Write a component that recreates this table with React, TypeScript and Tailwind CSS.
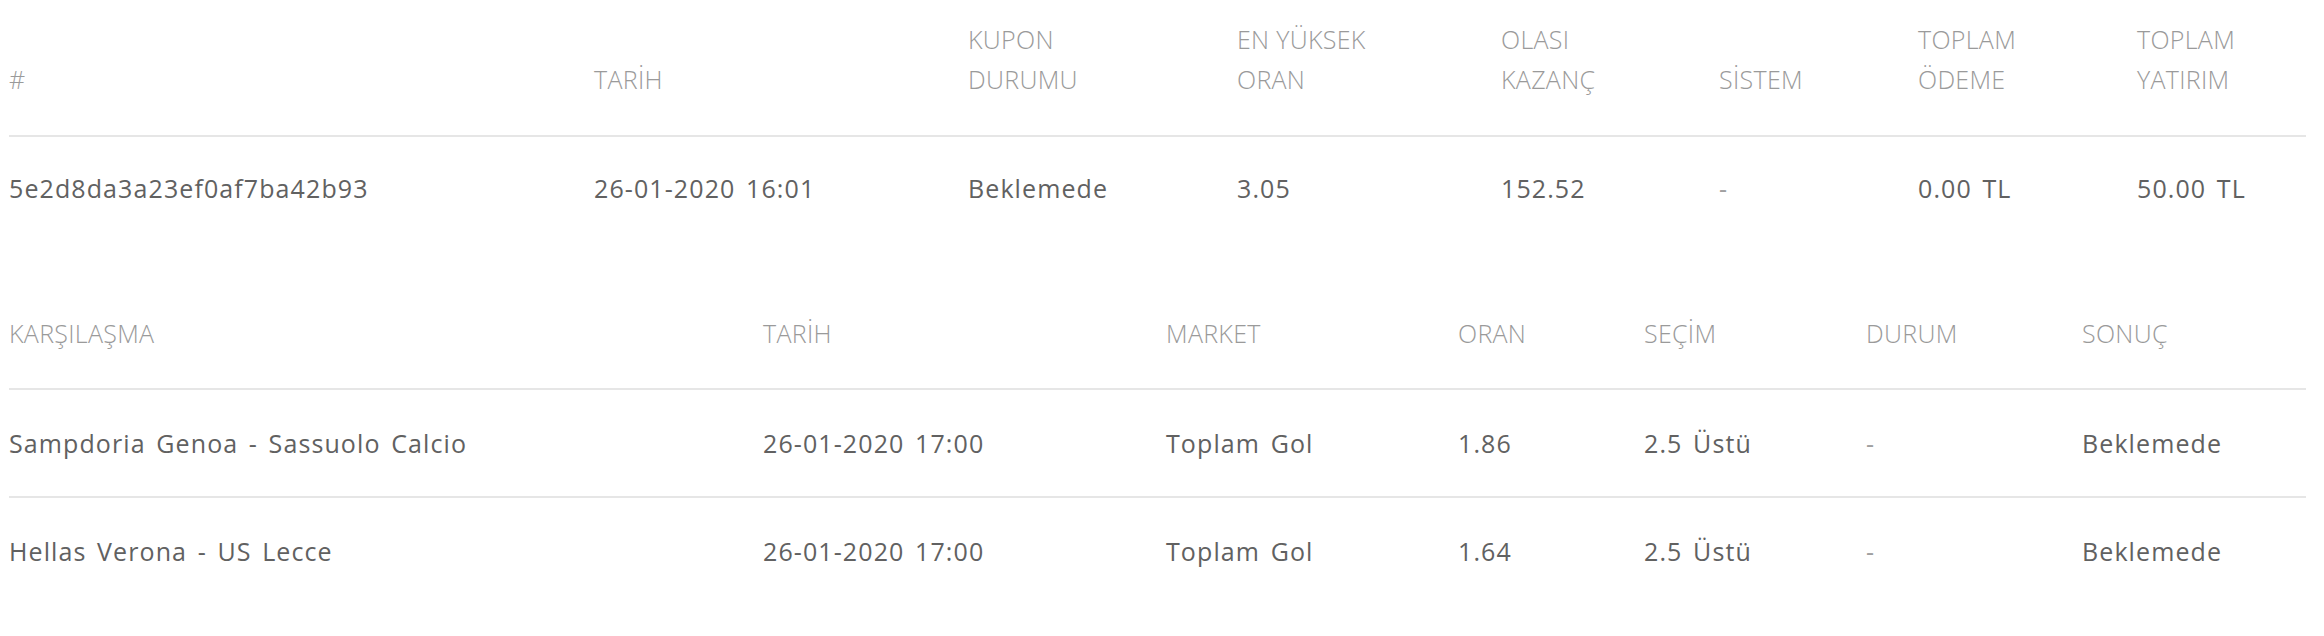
import React from 'react';

const couponCols = 'grid grid-cols-[585px_374px_269px_264px_218px_199px_219px_1fr]';
const matchCols = 'grid grid-cols-[754px_403px_292px_186px_222px_216px_1fr]';

const couponHead = ['#', 'TARİH', 'KUPON\nDURUMU', 'EN YÜKSEK\nORAN', 'OLASI\nKAZANÇ', 'SİSTEM', 'TOPLAM\nÖDEME', 'TOPLAM\nYATIRIM'];
const couponRow = ['5e2d8da3a23ef0af7ba42b93', '26-01-2020 16:01', 'Beklemede', '3.05', '152.52', '-', '0.00 TL', '50.00 TL'];

const matchHead = ['KARŞILAŞMA', 'TARİH', 'MARKET', 'ORAN', 'SEÇİM', 'DURUM', 'SONUÇ'];
const matches = [
  ['Sampdoria Genoa - Sassuolo Calcio', '26-01-2020 17:00', 'Toplam Gol', '1.86', '2.5 Üstü', '-', 'Beklemede'],
  ['Hellas Verona - US Lecce', '26-01-2020 17:00', 'Toplam Gol', '1.64', '2.5 Üstü', '-', 'Beklemede'],
];

function HeadCell({ text }: { text: string }) {
  return (
    <div className="flex flex-col justify-end whitespace-pre-line tracking-[0.3px] text-[#9a9a9a] font-light">
      {text}
    </div>
  );
}

function BodyCell({ text }: { text: string }) {
  return (
    <div className={`tracking-[1.1px] [word-spacing:3px] ${text === '-' ? 'text-[#a0a0a0]' : ''}`}>{text}</div>
  );
}

export default function App() {
  return (
    <div className="w-[2324px] h-[636px] bg-white pl-[9px] pr-[18px] text-[25px] leading-[40px] font-['Open_Sans','Lato',sans-serif]">
      {/* Kupon özeti */}
      <div className={`${couponCols} pt-[19px] pb-[36px] border-b-2 border-[#e6e6e6]`}>
        {couponHead.map((h) => (
          <HeadCell key={h} text={h} />
        ))}
      </div>
      <div className={`${couponCols} py-[31px] text-[#616161]`}>
        {couponRow.map((c, i) => (
          <BodyCell key={i} text={c} />
        ))}
      </div>

      {/* Karşılaşmalar */}
      <div className={`${matchCols} mt-[41px] pt-[33px] pb-[35px] border-b-2 border-[#e6e6e6]`}>
        {matchHead.map((h) => (
          <HeadCell key={h} text={h} />
        ))}
      </div>
      {matches.map((row, r) => (
        <div
          key={r}
          className={`${matchCols} py-[33px] text-[#616161] ${r < matches.length - 1 ? 'border-b-2 border-[#e6e6e6]' : ''}`}
        >
          {row.map((c, i) => (
            <BodyCell key={i} text={c} />
          ))}
        </div>
      ))}
    </div>
  );
}
